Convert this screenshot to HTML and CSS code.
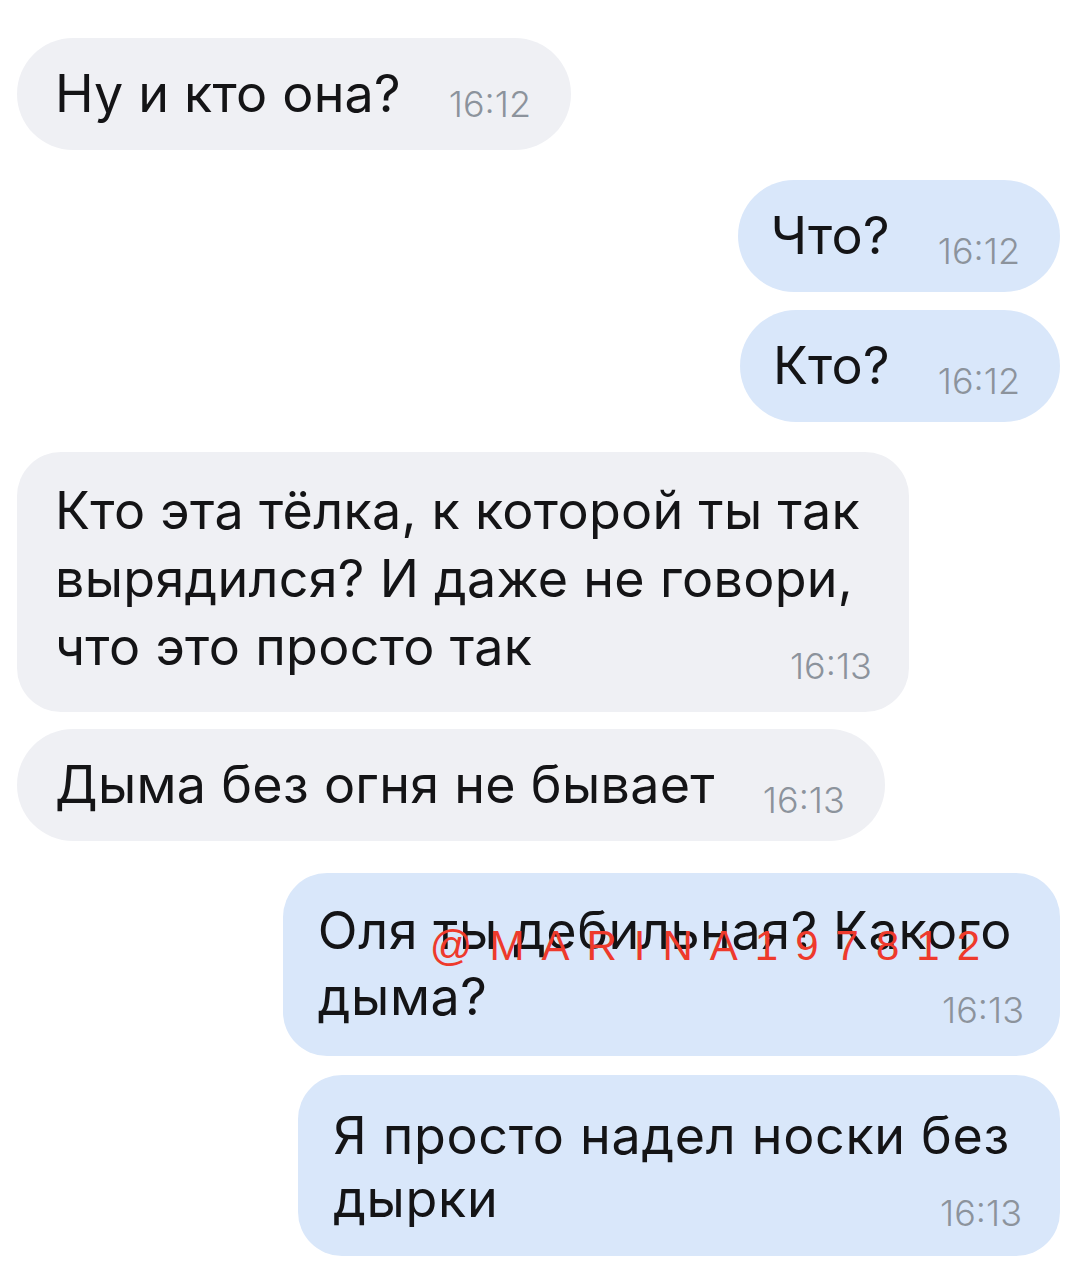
FILE: index.html
```html
<!DOCTYPE html>
<html lang="ru">
<head>
<meta charset="utf-8">
<title>Чат</title>
<link rel="stylesheet" href="styles.css">
</head>
<body>
<main class="chat">
  <div class="bubble in single b1"><span class="text">Ну и кто она?</span><span class="time">16:12</span></div>
  <div class="bubble out single b2"><span class="text">Что?</span><span class="time">16:12</span></div>
  <div class="bubble out single b3"><span class="text">Кто?</span><span class="time">16:12</span></div>
  <div class="bubble in multi b4"><span class="text">Кто эта тёлка, к которой ты так<br>вырядился? И даже не говори,<br>что это просто так</span><span class="time">16:13</span></div>
  <div class="bubble in single b5"><span class="text">Дыма без огня не бывает</span><span class="time">16:13</span></div>
  <div class="bubble out multi b6"><span class="text">Оля ты дебильная? Какого<br>дыма?</span><span class="time">16:13</span><span class="watermark">@MARINA197812</span></div>
  <div class="bubble out multi b7"><span class="text">Я просто надел носки без<br>дырки</span><span class="time">16:13</span></div>
</main>
</body>
</html>
```
FILE: styles.css
```css
html, body {
  margin: 0;
  padding: 0;
  background: #ffffff;
}
body {
  width: 1080px;
  height: 1276px;
  overflow: hidden;
  font-family: Inter, "Liberation Sans", Arial, sans-serif;
  color: #141416;
}
.chat {
  display: flex;
  flex-direction: column;
  padding-top: 38px;
}
.bubble {
  box-sizing: border-box;
  white-space: nowrap;
  font-size: 52px;
  letter-spacing: 0.2px;
}
.bubble.in {
  align-self: flex-start;
  margin-left: 17px;
  background: #eff0f4;
}
.bubble.out {
  align-self: flex-end;
  margin-right: 20px;
  background: #d9e7fa;
}
.single {
  height: 112px;
  border-radius: 56px;
  line-height: 112px;
  padding: 0 40px 0 38px;
}
.single .time {
  margin-left: 48px;
  vertical-align: -10px;
}
.time {
  font-family: Inter, "Liberation Sans", sans-serif;
  font-weight: 300;
  font-size: 36px;
  letter-spacing: 0;
  color: #8c939c;
}
.multi {
  display: grid;
  border-radius: 44px;
  position: relative;
}
.multi .text, .multi .time {
  grid-area: 1 / 1;
}
.multi .text {
  padding-right: 12px;
}
.multi .time {
  justify-self: end;
  align-self: end;
  line-height: 1;
}

.b1 .time { vertical-align: -5px; }
.b2 { margin-top: 30px; padding-left: 33px; }
.b3 { margin-top: 18px; padding-left: 33px; }
.b4 {
  margin-top: 30px;
  line-height: 68px;
  padding: 25px 37px 31px 38px;
  letter-spacing: 0.3px;
}
.b4 .time { margin-bottom: -3px; }
.b5 { margin-top: 17px; letter-spacing: 0.3px; }
.b6 {
  margin-top: 32px;
  line-height: 66px;
  padding: 25px 36px 26px 35px;
  letter-spacing: 0.6px;
}
.b6 .time { margin-bottom: 2px; }
.b7 {
  margin-top: 19px;
  line-height: 63px;
  padding: 29px 38px 26px 35px;
  letter-spacing: 0.7px;
}
.b7 .time { margin-bottom: -1px; }

.watermark {
  position: absolute;
  right: 63px;
  top: 52px;
  font-family: "Liberation Sans", Arial, sans-serif;
  font-size: 42px;
  line-height: 1;
  letter-spacing: 17px;
  color: #ee3a2c;
}
```
